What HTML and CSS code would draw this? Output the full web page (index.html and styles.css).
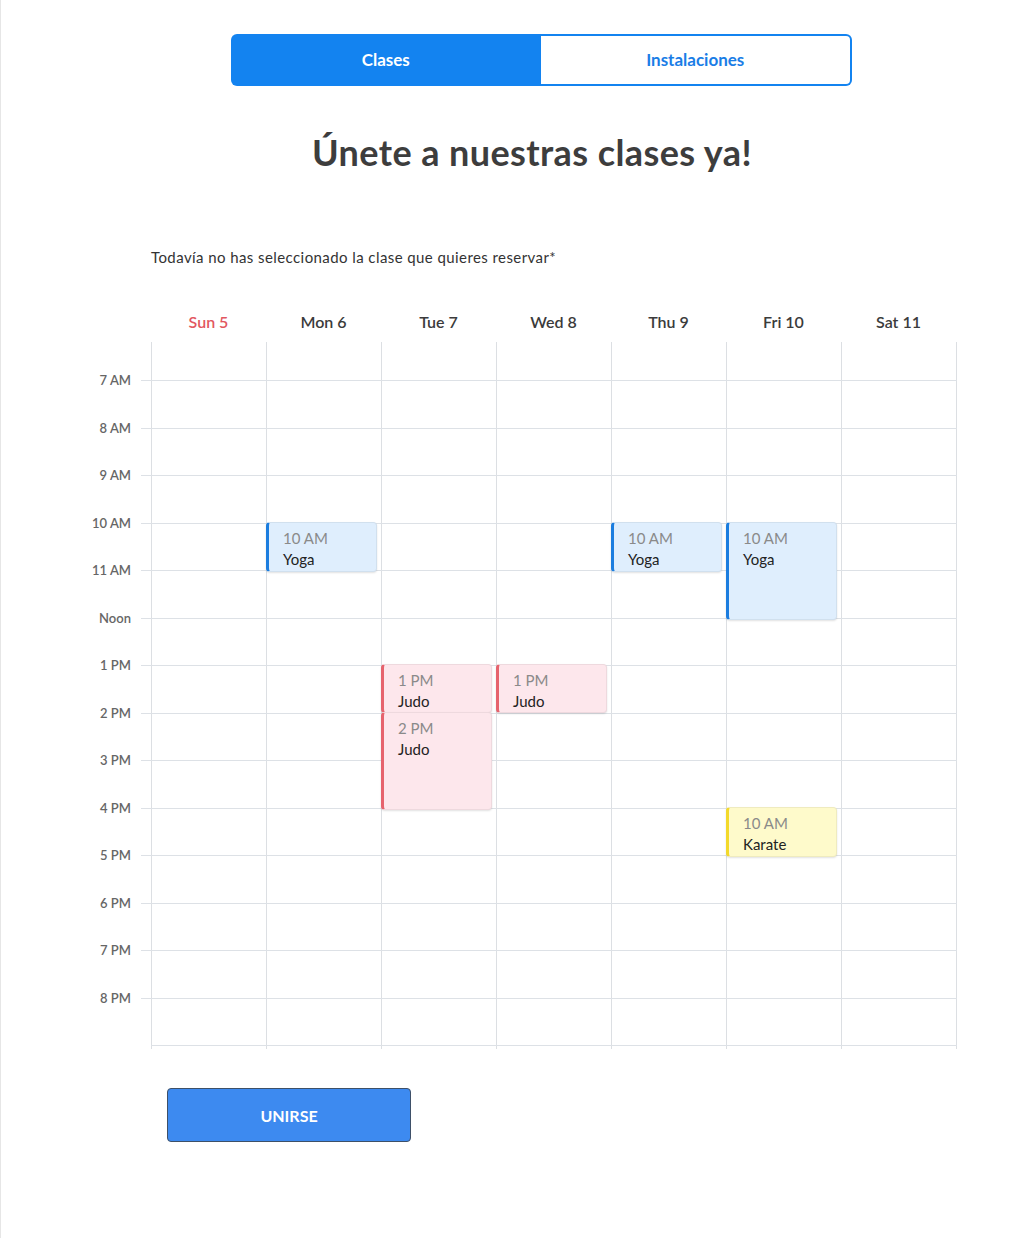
FILE: index.html
```html
<!DOCTYPE html>
<html lang="es">
<head>
<meta charset="utf-8">
<title>Clases</title>
<link rel="stylesheet" href="styles.css">
</head>
<body>
<div class="page">
  <div class="tabs">
    <div class="tab tab-active">Clases</div>
    <div class="tab tab-idle">Instalaciones</div>
  </div>
  <h1 class="title">Únete a nuestras clases ya!</h1>
  <p class="note">Todavía no has seleccionado la clase que quieres reservar*</p>

  <div class="cal">
    <div class="cal-head">
      <div></div>
      <div class="day day-today">Sun 5</div>
      <div class="day">Mon 6</div>
      <div class="day">Tue 7</div>
      <div class="day">Wed 8</div>
      <div class="day">Thu 9</div>
      <div class="day">Fri 10</div>
      <div class="day">Sat 11</div>
    </div>
    <div class="cal-body">
      <div class="times">
        <div class="t"><span>7 AM</span></div>
        <div class="t"><span>8 AM</span></div>
        <div class="t"><span>9 AM</span></div>
        <div class="t"><span>10 AM</span></div>
        <div class="t"><span>11 AM</span></div>
        <div class="t"><span>Noon</span></div>
        <div class="t"><span>1 PM</span></div>
        <div class="t"><span>2 PM</span></div>
        <div class="t"><span>3 PM</span></div>
        <div class="t"><span>4 PM</span></div>
        <div class="t"><span>5 PM</span></div>
        <div class="t"><span>6 PM</span></div>
        <div class="t"><span>7 PM</span></div>
        <div class="t"><span>8 PM</span></div>
      </div>
      <div class="grid">
        <div class="row"></div><div class="row"></div><div class="row"></div><div class="row"></div>
        <div class="row"></div><div class="row"></div><div class="row"></div><div class="row"></div>
        <div class="row"></div><div class="row"></div><div class="row"></div><div class="row"></div>
        <div class="row"></div><div class="row last"></div>

        <div class="ev ev-blue" style="left:115px;top:180px;height:50px"><div class="ev-time">10 AM</div><div class="ev-name">Yoga</div></div>
        <div class="ev ev-blue" style="left:460px;top:180px;height:50px"><div class="ev-time">10 AM</div><div class="ev-name">Yoga</div></div>
        <div class="ev ev-blue" style="left:575px;top:180px;height:98px"><div class="ev-time">10 AM</div><div class="ev-name">Yoga</div></div>
        <div class="ev ev-red" style="left:230px;top:322px;height:49px"><div class="ev-time">1 PM</div><div class="ev-name">Judo</div></div>
        <div class="ev ev-red" style="left:230px;top:370px;height:98px"><div class="ev-time">2 PM</div><div class="ev-name">Judo</div></div>
        <div class="ev ev-red" style="left:345px;top:322px;height:49px"><div class="ev-time">1 PM</div><div class="ev-name">Judo</div></div>
        <div class="ev ev-yellow" style="left:575px;top:465px;height:50px"><div class="ev-time">10 AM</div><div class="ev-name">Karate</div></div>
      </div>
    </div>
  </div>

  <button class="join">UNIRSE</button>
</div>
</body>
</html>
```

FILE: styles.css
```css
* { box-sizing: border-box; }

html, body {
  margin: 0;
  padding: 0;
  background: #ffffff;
}

body {
  font-family: "Source Sans Pro", "Lato", "Noto Sans", sans-serif;
  color: #333333;
}

.page {
  min-height: 1238px;
  border-left: 1px solid #e6e6e6;
  padding-top: 34px;
}

.tabs {
  display: flex;
  width: 621px;
  height: 52px;
  margin-left: 230px;
}

.tab {
  flex: 1;
  display: flex;
  align-items: center;
  justify-content: center;
  font-size: 17px;
  font-weight: 700;
  padding-bottom: 1px;
}

.tab-active {
  background: #1383f0;
  color: #ffffff;
  border-radius: 6px 0 0 6px;
}

.tab-idle {
  background: #ffffff;
  color: #1a7de6;
  border: 2px solid #1383f0;
  border-left: none;
  border-radius: 0 6px 6px 0;
}

.title {
  margin: 44px 0 0 71px;
  width: 920px;
  text-align: center;
  font-size: 36px;
  line-height: 44px;
  font-weight: 700;
  letter-spacing: 0.4px;
  color: #3d3d3d;
}

.note {
  margin: 73px 0 0 150px;
  font-size: 15px;
  line-height: 20px;
  letter-spacing: 0.42px;
  color: #333333;
}

.cal {
  margin-top: 35px;
  width: 957px;
}

.cal-head {
  display: grid;
  grid-template-columns: 150px repeat(7, 115px);
  height: 40px;
}

.day {
  text-align: center;
  line-height: 40px;
  font-size: 16px;
  font-weight: 600;
  color: #3b3b3b;
}

.day-today {
  color: #e2575f;
}

.cal-body {
  display: flex;
}

.times {
  width: 150px;
  padding-top: 38px;
}

.t {
  position: relative;
  height: 47.5px;
}

.t span {
  display: block;
  width: 130px;
  text-align: right;
  font-size: 13px;
  font-weight: 600;
  line-height: 16px;
  color: #666666;
  transform: translateY(-50%);
}

.t::after {
  content: "";
  position: absolute;
  top: 0;
  right: 0;
  width: 10px;
  border-top: 1px solid #dde1e6;
}

.grid {
  position: relative;
  width: 806px;
  padding-top: 38px;
  padding-bottom: 3px;
  background-image: repeating-linear-gradient(to right, #dcdfe3 0, #dcdfe3 1px, transparent 1px, transparent 115px);
}

.row {
  height: 47.5px;
  border-top: 1px solid #dde1e6;
}

.row.last {
  border-bottom: 1px solid #dde1e6;
  height: 48.5px;
}

.ev {
  position: absolute;
  width: 111px;
  padding: 5px 8px 0 14px;
  border-radius: 4px;
  border: 1px solid rgba(0, 0, 0, 0.06);
  border-left: 3px solid;
  box-shadow: 0 1px 2px rgba(0, 0, 0, 0.12);
  font-size: 15px;
  line-height: 21px;
}

.ev-time {
  color: #8a8a8a;
}

.ev-name {
  color: #222222;
}

.ev-blue {
  background: #dfeefd;
  border-left-color: #1b7ddf;
}

.ev-red {
  background: #fde7ec;
  border-left-color: #e6636d;
}

.ev-yellow {
  background: #fefacb;
  border-left-color: #f3d92a;
}

.join {
  display: block;
  margin: 39px 0 0 166px;
  width: 244px;
  height: 54px;
  background: #3d8af0;
  color: #ffffff;
  border: 1px solid #3e5068;
  border-radius: 4px;
  font-family: inherit;
  font-size: 16px;
  font-weight: 700;
  cursor: pointer;
}
```
